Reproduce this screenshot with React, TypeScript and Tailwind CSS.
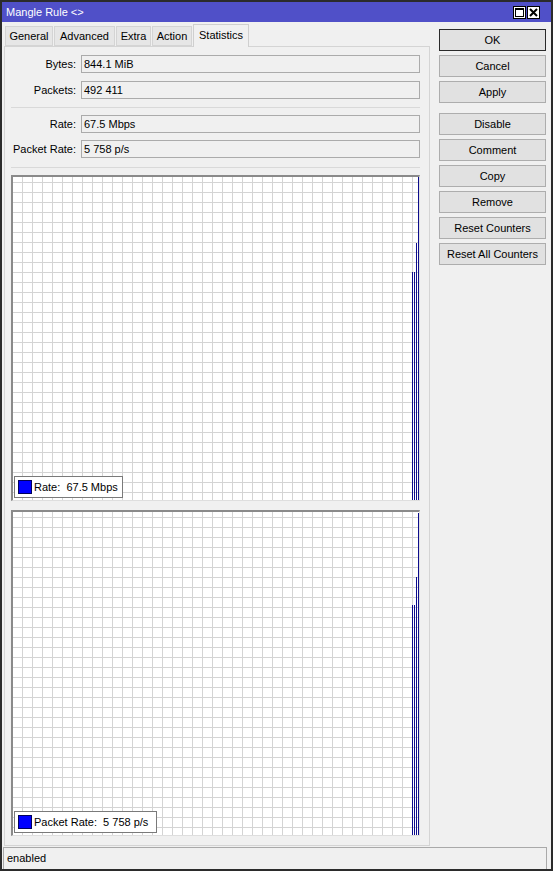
const tabs = [
  { name: 'General', w: 'w-[48px]' },
  { name: 'Advanced', w: 'w-[61px]' },
  { name: 'Extra', w: 'w-[35px]' },
  { name: 'Action', w: 'w-[40px]' },
  { name: 'Statistics', w: 'w-[56px]', active: true },
];

const topButtons = ['OK', 'Cancel', 'Apply'];
const moreButtons = ['Disable', 'Comment', 'Copy', 'Remove', 'Reset Counters', 'Reset All Counters'];

// right-most samples: [x offset from left, y where the bar starts]
type Bar = [number, number];

const Field = ({ label, value }: { label: string; value: string }) => (
  <div className="flex items-center h-[18px]">
    <span className="w-[71px] text-right whitespace-nowrap">{label}</span>
    <div className="ml-[5px] w-[339px] h-[18px] border border-[#ababab] bg-[#f0f0f0] flex items-center pl-[2px]">
      {value}
    </div>
  </div>
);

const Graph = ({
  id,
  bars,
  legend,
  legendW,
}: {
  id: string;
  bars: Bar[];
  legend: string;
  legendW: string;
}) => (
  <div className="relative ml-[6px] w-[409px] h-[326px] bg-white border-t-2 border-l-2 border-t-[#8a8a8a] border-l-[#8a8a8a] border-r border-b border-r-[#dedede] border-b-[#dedede]">
    <svg width="406" height="323" className="block">
      <defs>
        <pattern id={id} x="9" y="5" width="10" height="10" patternUnits="userSpaceOnUse">
          <rect x="0" y="0" width="1" height="10" fill="#d4d4d4" />
          <rect x="0" y="0" width="10" height="1" fill="#d4d4d4" />
        </pattern>
      </defs>
      <rect width="406" height="323" fill={`url(#${id})`} />
      {bars.map(([x, y]) => (
        <rect key={x} x={x} y={y} width="1" height={323 - y} fill="#0c0c8c" />
      ))}
    </svg>
    <div
      className={`absolute left-[1px] bottom-[2px] h-[22px] ${legendW} bg-white border border-[#7a7a7a] flex items-center pl-[3px]`}
    >
      <span className="w-[14px] h-[14px] bg-[#0000ff] border border-[#00005a]" />
      <span className="ml-[2px] whitespace-pre">{legend}</span>
    </div>
  </div>
);

const Button = ({ label, primary }: { label: string; primary?: boolean }) => (
  <div
    className={`h-[22px] w-[107px] flex items-center justify-center bg-[#e1e1e1] border ${
      primary ? 'border-[#2a2a2a]' : 'border-[#adadad]'
    }`}
  >
    {label}
  </div>
);

export default function App() {
  return (
    <div className="w-[553px] h-[871px] flex flex-col bg-[#f0f0f0] border-2 border-[#2b2b2b] text-[11px] text-black font-['Liberation_Sans',Arial,sans-serif] overflow-hidden">
      {/* title bar */}
      <div className="h-[20px] shrink-0 bg-[#5050c8] flex items-center justify-between pl-[4px] pr-[11px]">
        <span className="text-white">Mangle Rule &lt;&gt;</span>
        <div className="flex gap-[1px]">
          <div className="w-[13px] h-[13px] bg-white border border-black flex items-center justify-center">
            <svg width="9" height="9" viewBox="0 0 9 9">
              <rect x="0.5" y="0.5" width="8" height="8" fill="none" stroke="#000" />
              <rect x="0" y="0" width="9" height="2" fill="#000" />
            </svg>
          </div>
          <div className="w-[13px] h-[13px] bg-white border border-black flex items-center justify-center">
            <svg width="9" height="9" viewBox="0 0 9 9">
              <path d="M1 1 L8 8 M8 1 L1 8" stroke="#000" strokeWidth="2" />
            </svg>
          </div>
        </div>
      </div>

      <div className="flex-1 flex pl-[2px] mb-[1px] min-h-0">
        <div className="w-[426px] flex flex-col pt-[2px]">
          {/* tabs */}
          <div className="h-[22px] flex items-end gap-[1px] pl-[1px] relative z-10">
            {tabs.map((t) =>
              t.active ? (
                <div
                  key={t.name}
                  className={`${t.w} h-[23px] -mb-px bg-[#f0f0f0] border border-b-0 border-[#cfcfcf] flex items-center justify-center pb-[2px]`}
                >
                  {t.name}
                </div>
              ) : (
                <div
                  key={t.name}
                  className={`${t.w} h-[20px] bg-[#e6e6e6] border border-[#d4d4d4] flex items-center justify-center`}
                >
                  {t.name}
                </div>
              ),
            )}
          </div>

          {/* tab page */}
          <div className="flex-1 border border-[#d4d4d4] flex flex-col pt-[8px]">
            <Field label="Bytes:" value="844.1 MiB" />
            <div className="mt-[8px]">
              <Field label="Packets:" value="492 411" />
            </div>
            <div className="mt-[8px] ml-[6px] w-[409px] h-px bg-[#d9d9d9]" />
            <div className="mt-[7px]">
              <Field label="Rate:" value="67.5 Mbps" />
            </div>
            <div className="mt-[7px]">
              <Field label="Packet Rate:" value="5 758 p/s" />
            </div>
            <div className="mt-[9px] ml-[6px] w-[409px] h-px bg-[#d9d9d9]" />
            <div className="mt-[7px]">
              <Graph
                id="rate-grid"
                bars={[[399, 95], [401, 95], [403, 66], [405, 0]]}
                legend="Rate:  67.5 Mbps"
                legendW="w-[109px]"
              />
            </div>
            <div className="mt-[9px]">
              <Graph
                id="packet-grid"
                bars={[[399, 93], [401, 93], [403, 65], [405, 1]]}
                legend="Packet Rate:  5 758 p/s"
                legendW="w-[143px]"
              />
            </div>
          </div>
        </div>

        {/* side buttons */}
        <div className="ml-[9px] pt-[7px] flex flex-col gap-[4px]">
          {topButtons.map((b) => (
            <Button key={b} label={b} primary={b === 'OK'} />
          ))}
          <div className="h-[2px]" />
          {moreButtons.map((b) => (
            <Button key={b} label={b} />
          ))}
        </div>
      </div>

      {/* status bar */}
      <div className="h-[22px] shrink-0 ml-[1px] mr-[4px] border-t border-r border-l border-[#a9a9a9] flex items-center pl-[3px]">
        enabled
      </div>
    </div>
  );
}
